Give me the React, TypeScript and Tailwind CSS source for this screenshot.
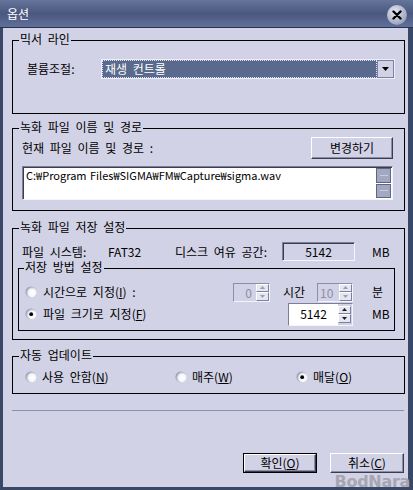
import React from "react"

function Legend({ children, className }: { children: React.ReactNode; className?: string }) {
  return (
    <span className={"absolute top-[-9px] bg-[#d2d2e6] px-[1px] leading-[14px] whitespace-nowrap " + (className ?? "")}>
      {children}
    </span>
  )
}

function Radio({ checked }: { checked?: boolean }) {
  return (
    <svg width="12" height="12" viewBox="0 0 12 12" className="shrink-0">
      <defs>
        <radialGradient id="radioFill" cx="62%" cy="58%" r="62%">
          <stop offset="0" stopColor="#ffffff" />
          <stop offset="0.55" stopColor="#f6f6fb" />
          <stop offset="1" stopColor="#8e94ae" />
        </radialGradient>
      </defs>
      <circle cx="6" cy="6" r="5.5" fill="url(#radioFill)" />
      {checked && <circle cx="6.2" cy="6.2" r="1.9" fill="#000" />}
    </svg>
  )
}

function Spin({ disabled }: { disabled?: boolean }) {
  const arrow = disabled ? "#9a9cb4" : "#1c1c28"
  return (
    <div className="flex flex-col w-[13px] shrink-0 self-stretch">
      <div className="flex-1 flex items-center justify-center bg-[#e6e6f0] border-t border-l border-t-white border-l-white border-b border-r border-b-[#7c80a0] border-r-[#7c80a0]">
        <svg width="5" height="3" viewBox="0 0 5 3">
          <path d="M0 3h5L2.5 0z" fill={arrow} />
        </svg>
      </div>
      <div className="flex-1 flex items-center justify-center bg-[#e6e6f0] border-t border-l border-t-white border-l-white border-b border-r border-b-[#7c80a0] border-r-[#7c80a0]">
        <svg width="5" height="3" viewBox="0 0 5 3">
          <path d="M0 0h5L2.5 3z" fill={arrow} />
        </svg>
      </div>
    </div>
  )
}

function Button({ children, primary, className }: { children: React.ReactNode; primary?: boolean; className?: string }) {
  return (
    <div className={(primary ? "border border-black " : "") + "shrink-0 " + (className ?? "")}>
      <div className="h-full flex items-center justify-center bg-[#d2d2e6] border-t border-l border-t-white border-l-white border-b border-r border-b-[#3c3c4c] border-r-[#3c3c4c] shadow-[inset_-1px_-1px_0_#8a8eaa]">
        {children}
      </div>
    </div>
  )
}

export default function App() {
  return (
    <div className="w-[413px] h-[490px] relative overflow-hidden bg-[#3a4868] flex flex-col font-['Noto_Sans_CJK_KR','Noto_Sans',sans-serif] text-[12px] text-black [word-spacing:3px]">
      {/* title bar */}
      <div className="h-[28px] shrink-0 flex items-start justify-between pl-[7px] pr-[6px] bg-linear-to-b from-[#65749a] via-[#4a5880] to-[#61709a] border-b border-[#27324e]">
        <span className="pt-[5px] text-white leading-[18px]">옵션</span>
        <div className="mt-[5px] w-[20px] h-[20px] rounded-full flex items-center justify-center bg-[radial-gradient(circle_at_40%_35%,#e6e8f2,#a4aac2_65%,#6a7294)]">
          <svg width="10" height="10" viewBox="0 0 10 10">
            <path d="M1.5 1.5l7 7M8.5 1.5l-7 7" stroke="#000" strokeWidth="2.4" strokeLinecap="round" />
          </svg>
        </div>
      </div>

      {/* body */}
      <div className="flex-1 bg-[#d2d2e6] ml-[3px] mr-[5px] mb-[3px] flex flex-col pl-[9px] pr-[3px]">
        {/* 믹서 라인 */}
        <div className="mt-[12px] h-[74px] shrink-0 border border-black relative">
          <Legend className="left-[6px]">믹서 라인</Legend>
          <div className="flex items-center pt-[18px] pl-[14px]">
            <span className="w-[74px] shrink-0">볼륨조절:</span>
            <div className="flex h-[20px] w-[294px] bg-[#eeeef8] p-[1px]">
              <div className="flex-1 flex items-center bg-[#5a6a8c] outline-1 outline-dotted outline-[#e0e0f0] -outline-offset-1 pl-[3px] text-white leading-[16px]">
                재생 컨트롤
              </div>
              <div className="w-[17px] flex items-center justify-center bg-[#d2d2e6] border border-[#7a82a0]">
                <svg width="7" height="4" viewBox="0 0 7 4">
                  <path d="M0 0h7L3.5 4z" fill="#000" />
                </svg>
              </div>
            </div>
          </div>
        </div>

        {/* 녹화 파일 이름 및 경로 */}
        <div className="mt-[14px] h-[83px] shrink-0 border border-black relative">
          <Legend className="left-[6px]">녹화 파일 이름 및 경로</Legend>
          <div className="flex items-center justify-between pt-[8px] pl-[9px] pr-[11px]">
            <span>현재 파일 이름 및 경로 :</span>
            <Button className="w-[82px] h-[22px]">변경하기</Button>
          </div>
          <div className="mt-[7px] ml-[9px] w-[371px] h-[34px] flex bg-white border-t border-l border-t-[#7a7e9a] border-l-[#7a7e9a] border-b border-r border-b-[#f4f4fc] border-r-[#f4f4fc] shadow-[inset_1px_1px_0_#3c3c4c]">
            <div className="flex-1 pl-[3px] pt-[1px] leading-[15px] text-[11px] tracking-[0px] [word-spacing:1px]">
              C:₩Program Files₩SIGMA₩FM₩Capture₩sigma.wav
            </div>
            <div className="w-[16px] flex flex-col gap-[1px] py-[1px] pr-[1px]">
              <div className="flex-1 flex items-center justify-center bg-[#a2a8c0] border border-[#5e6482]">
                <div className="w-[8px] h-[1px] bg-[#c8cce0]" />
              </div>
              <div className="flex-1 flex items-center justify-center bg-[#a2a8c0] border border-[#5e6482]">
                <div className="w-[8px] h-[1px] bg-[#c8cce0]" />
              </div>
            </div>
          </div>
        </div>

        {/* 녹화 파일 저장 설정 */}
        <div className="mt-[17px] h-[112px] shrink-0 border border-black relative">
          <Legend className="left-[6px]">녹화 파일 저장 설정</Legend>
          <div className="flex items-center pt-[13px] pl-[9px] h-[32px]">
            <span className="w-[86px] shrink-0">파일 시스템:</span>
            <span className="w-[67px] shrink-0">FAT32</span>
            <span className="w-[107px] shrink-0">디스크 여유 공간:</span>
            <div className="w-[73px] h-[19px] shrink-0 flex items-center justify-center border-t border-l border-t-[#7a7e9a] border-l-[#7a7e9a] border-b border-r border-b-[#f4f4fc] border-r-[#f4f4fc] shadow-[inset_1px_1px_0_#3c3c4c]">
              5142
            </div>
            <span className="ml-[17px]">MB</span>
          </div>

          {/* 저장 방법 설정 */}
          <div className="mt-[7px] ml-[5px] mr-[9px] h-[63px] border border-black relative">
            <Legend className="left-[5px]">저장 방법 설정</Legend>
            <div className="pt-[12px] pl-[6px]">
              <div className="h-[22px] flex items-center">
                <Radio />
                <span className="ml-[6px] w-[190px] shrink-0">
                  시간으로 지정(<span className="underline">I</span>) :
                </span>
                <div className="w-[37px] h-[19px] flex border-t border-l border-t-[#8a8ea8] border-l-[#8a8ea8] border-b border-r border-b-[#f4f4fc] border-r-[#f4f4fc]">
                  <span className="flex-1 text-right pr-[4px] leading-[17px] text-[#8c8ea6]">0</span>
                  <Spin disabled />
                </div>
                <span className="ml-[13px] w-[24px] shrink-0">시간</span>
                <div className="ml-[10px] w-[36px] h-[19px] flex border-t border-l border-t-[#8a8ea8] border-l-[#8a8ea8] border-b border-r border-b-[#f4f4fc] border-r-[#f4f4fc]">
                  <span className="flex-1 pl-[2px] leading-[17px] text-[#8c8ea6]">10</span>
                  <Spin disabled />
                </div>
                <span className="ml-[19px]">분</span>
              </div>
              <div className="h-[22px] flex items-center">
                <Radio checked />
                <span className="ml-[6px] w-[245px] shrink-0">
                  파일 크기로 지정(<span className="underline">F</span>)
                </span>
                <div className="w-[65px] h-[23px] flex bg-white border-t border-l border-t-[#7a7e9a] border-l-[#7a7e9a] border-b border-r border-b-[#f4f4fc] border-r-[#f4f4fc] shadow-[inset_1px_1px_0_#3c3c4c]">
                  <span className="flex-1 text-center leading-[20px] bg-white">5142</span>
                  <div className="w-[14px] flex py-[2px] pr-[1px] bg-[#d2d2e6]">
                    <Spin />
                  </div>
                </div>
                <span className="ml-[19px]">MB</span>
              </div>
            </div>
          </div>
        </div>

        {/* 자동 업데이트 */}
        <div className="mt-[16px] h-[38px] shrink-0 border border-black relative">
          <Legend className="left-[6px]">자동 업데이트</Legend>
          <div className="flex items-center h-[20px] mt-[10px] pl-[12px]">
            <div className="w-[150px] shrink-0 flex items-center">
              <Radio />
              <span className="ml-[5px]">
                사용 안함(<span className="underline">N</span>)
              </span>
            </div>
            <div className="w-[121px] shrink-0 flex items-center">
              <Radio />
              <span className="ml-[5px]">
                매주(<span className="underline">W</span>)
              </span>
            </div>
            <div className="flex items-center">
              <Radio checked />
              <span className="ml-[5px]">
                매달(<span className="underline">O</span>)
              </span>
            </div>
          </div>
        </div>

        <div className="mt-[16px] h-[1px] mr-[1px] bg-[#8a90ae] shrink-0" />

        <div className="mt-[42px] flex justify-end gap-[13px] pr-[1px]">
          <Button primary className="w-[74px] h-[20px]">
            확인(<span className="underline">O</span>)
          </Button>
          <Button className="w-[74px] h-[20px]">
            취소(<span className="underline">C</span>)
          </Button>
        </div>
      </div>

      {/* watermark */}
      <span className="absolute right-[3px] bottom-[0px] font-['DejaVu_Sans',sans-serif] font-bold text-[16px] leading-[16px] tracking-[-0.3px] text-[#a6a6b2] [word-spacing:0px]">
        BodNara
      </span>
    </div>
  )
}
